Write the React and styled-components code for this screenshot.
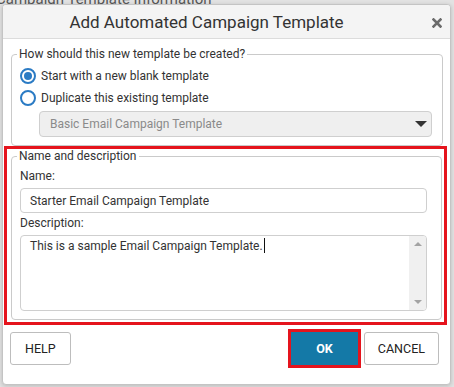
import React from "react";
import styled, { createGlobalStyle } from "styled-components";

const GlobalStyle = createGlobalStyle`
  *, *::before, *::after {
    box-sizing: border-box;
  }
  html, body {
    margin: 0;
    padding: 0;
    background: #e2e2e2;
    font-family: Roboto, "Liberation Sans", Arial, sans-serif;
    color: #333;
  }
`;

const Page = styled.div`
  width: 454px;
  height: 387px;
  overflow: hidden;
  background: #e2e2e2;
`;

const PageHeading = styled.div`
  height: 4px;
  overflow: hidden;
  font-size: 15px;
  line-height: 15px;
  color: #555;
  div {
    margin-top: -8px;
    margin-left: -4px;
    white-space: nowrap;
  }
`;

const Dialog = styled.div`
  margin-left: 2px;
  width: 449px;
  height: 381px;
  background: #fff;
  border: 1px solid #c4c4c4;
  border-radius: 4px;
  box-shadow: 0 1px 4px rgba(0, 0, 0, 0.18);
  display: flex;
  flex-direction: column;
  overflow: hidden;
`;

const TitleBar = styled.div`
  height: 34px;
  flex-shrink: 0;
  background: #f4f4f4;
  border-bottom: 1px solid #dcdcdc;
  display: flex;
  align-items: center;
  justify-content: center;
  padding-right: 40px;
  position: relative;
  font-size: 17px;
  color: #333;
`;

const Close = styled.svg`
  position: absolute;
  right: 8px;
  top: 13px;
`;

const Body = styled.div`
  padding: 8px 7px 0 8px;
  display: flex;
  flex-direction: column;
`;

const Fieldset = styled.fieldset`
  margin: 0;
  padding: ${(p) => p.$pad};
  border: 1px solid #cacaca;
  border-radius: 4px;
  min-width: 0;
  display: flex;
  flex-direction: column;
`;

const Legend = styled.legend`
  font-size: 12px;
  line-height: 15px;
  padding: 0 2px;
  margin-left: -3px;
  color: #333;
`;

const RadioRow = styled.label`
  display: flex;
  align-items: center;
  height: 22px;
  gap: 5px;
  font-size: 12px;
  color: #333;
`;

const RadioCircle = styled.span`
  width: 16px;
  height: 16px;
  border-radius: 50%;
  border: 2px solid #2b7bc4;
  display: flex;
  align-items: center;
  justify-content: center;
  flex-shrink: 0;
  &::after {
    content: "";
    display: ${(p) => (p.$checked ? "block" : "none")};
    width: 8px;
    height: 8px;
    border-radius: 50%;
    background: #2b7bc4;
  }
`;

const Select = styled.div`
  margin: 2px 0 0 19px;
  height: 26px;
  border: 1px solid #cfcfcf;
  border-radius: 4px;
  background: #efefef;
  display: flex;
  align-items: center;
  justify-content: space-between;
  padding: 0 4px 0 10px;
  font-size: 12px;
  color: #8a8a8a;
`;

const Caret = styled.span`
  width: 0;
  height: 0;
  border-left: 6px solid transparent;
  border-right: 6px solid transparent;
  border-top: 6px solid #333;
`;

const Highlight = styled.div`
  margin: 0 -4px 0 -7px;
  border: 3px solid #e5141d;
  padding: 0 2px 2px 4px;
`;

const FieldLabel = styled.div`
  font-size: 12px;
  line-height: 16px;
  color: #333;
  margin-top: ${(p) => p.$top};
`;

const TextBox = styled.div`
  margin-top: 4px;
  height: 25px;
  border: 1px solid #cfcfcf;
  border-radius: 4px;
  display: flex;
  align-items: center;
  padding-left: 9px;
  font-size: 12px;
  color: #333;
`;

const TextArea = styled.div`
  margin-top: 4px;
  height: 76px;
  border: 1px solid #cfcfcf;
  border-radius: 4px;
  display: flex;
  overflow: hidden;
`;

const AreaText = styled.div`
  flex: 1;
  padding: 2px 0 0 9px;
  font-size: 12px;
  line-height: 16px;
  color: #333;
`;

const TextCursor = styled.span`
  display: inline-block;
  width: 1px;
  height: 15px;
  background: #111;
  vertical-align: -3px;
  margin-left: 1px;
`;

const Scrollbar = styled.div`
  width: 17px;
  background: #f0f0f0;
  display: flex;
  flex-direction: column;
  justify-content: space-between;
  align-items: center;
  padding: 6px 0;
`;

const Arrow = styled.span`
  width: 0;
  height: 0;
  border-left: 4px solid transparent;
  border-right: 4px solid transparent;
  ${(p) =>
    p.$up ? "border-bottom: 4px solid #a3a3a3;" : "border-top: 4px solid #a3a3a3;"}
`;

const Footer = styled.div`
  display: flex;
  align-items: center;
  gap: 6px;
  padding: 7px 11px 0 7px;
`;

const Button = styled.button`
  height: 33px;
  padding: 0 ${(p) => p.$px}px;
  border: 1px solid ${(p) => (p.$primary ? "#1479a7" : "#bdbdbd")};
  border-radius: ${(p) => (p.$marked ? "0" : "3px")};
  background: ${(p) => (p.$primary ? "#1479a7" : "#fff")};
  color: ${(p) => (p.$primary ? "#fff" : "#222")};
  font-family: Roboto, "Liberation Sans", Arial, sans-serif;
  font-size: 12.5px;
  font-weight: ${(p) => (p.$primary ? 700 : 400)};
  outline: ${(p) => (p.$marked ? "3px solid #e5141d" : "none")};
  margin-left: ${(p) => (p.$push ? "auto" : "0")};
`;

export default function App() {
  return (
    <Page>
      <GlobalStyle />
      <PageHeading>
        <div>Campaign Template Information</div>
      </PageHeading>
      <Dialog>
        <TitleBar>
          Add Automated Campaign Template
          <Close width="10" height="10" viewBox="0 0 10 10">
            <path d="M1.5 1.5 L8.5 8.5 M8.5 1.5 L1.5 8.5" stroke="#6b6b6b" strokeWidth="2.6" strokeLinecap="square" />
          </Close>
        </TitleBar>
        <Body>
          <Fieldset $pad="3px 10px 8px 8px">
            <Legend>How should this new template be created?</Legend>
            <RadioRow>
              <RadioCircle $checked />
              Start with a new blank template
            </RadioRow>
            <RadioRow>
              <RadioCircle />
              Duplicate this existing template
            </RadioRow>
            <Select>
              Basic Email Campaign Template
              <Caret />
            </Select>
          </Fieldset>
          <Highlight>
            <Fieldset $pad="0 14px 8px 8px">
              <Legend>Name and description</Legend>
              <FieldLabel $top="4px">Name:</FieldLabel>
              <TextBox>Starter Email Campaign Template</TextBox>
              <FieldLabel $top="2px">Description:</FieldLabel>
              <TextArea>
                <AreaText>
                  This is a sample Email Campaign Template.
                  <TextCursor />
                </AreaText>
                <Scrollbar>
                  <Arrow $up />
                  <Arrow />
                </Scrollbar>
              </TextArea>
            </Fieldset>
          </Highlight>
        </Body>
        <Footer>
          <Button $px={14}>HELP</Button>
          <Button $primary $marked $push $px={24}>
            OK
          </Button>
          <Button $px={13}>CANCEL</Button>
        </Footer>
      </Dialog>
    </Page>
  );
}
